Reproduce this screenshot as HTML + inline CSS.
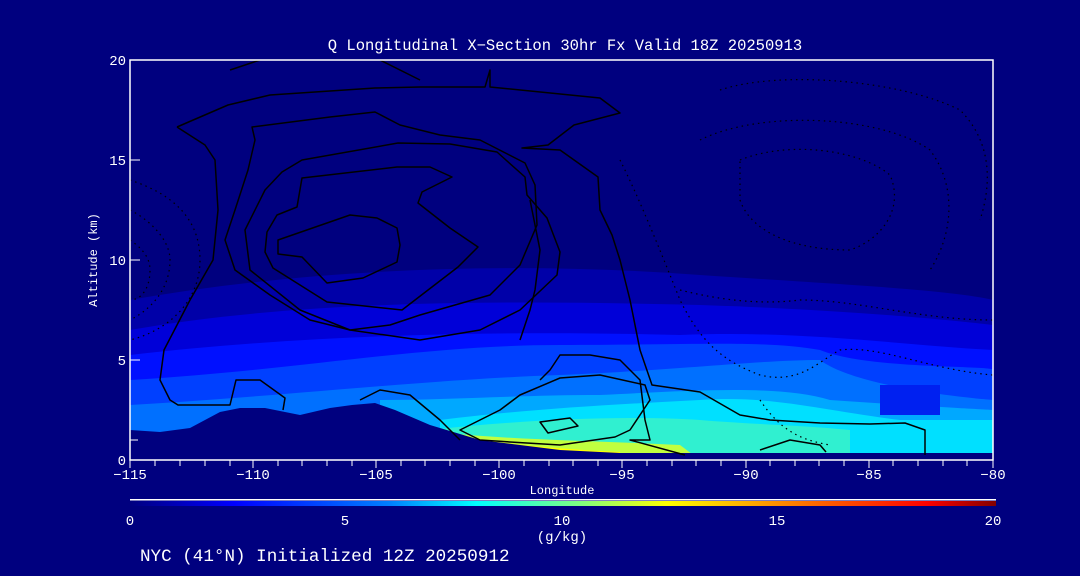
<!DOCTYPE html>
<html><head><meta charset="utf-8"><style>
html,body{margin:0;padding:0;background:#00007f;width:1080px;height:576px;overflow:hidden}
svg{display:block}
text{font-family:"Liberation Mono",monospace;fill:#fff}
</style></head><body>
<svg width="1080" height="576" viewBox="0 0 1080 576" xmlns="http://www.w3.org/2000/svg">
<defs>
<linearGradient id="cb" x1="0" x2="1" y1="0" y2="0">
<stop offset="0" stop-color="#00007f"/><stop offset="0.12" stop-color="#0000ff"/>
<stop offset="0.3" stop-color="#0080ff"/><stop offset="0.4" stop-color="#00ffff"/>
<stop offset="0.52" stop-color="#80ff80"/><stop offset="0.62" stop-color="#ffff00"/>
<stop offset="0.8" stop-color="#ff6000"/><stop offset="0.92" stop-color="#ff0000"/>
<stop offset="1" stop-color="#800000"/></linearGradient>
<clipPath id="pc"><rect x="130" y="60" width="863" height="400"/></clipPath>
</defs>
<rect width="1080" height="576" fill="#00007f"/>
<g clip-path="url(#pc)">
<path d="M130 300 C300 270 500 260 700 275 C850 285 950 290 993 300 L993 460 L130 460Z" fill="#0000a8"/>
<path d="M130 330 C300 300 500 300 700 305 C850 310 950 320 993 325 L993 460 L130 460Z" fill="#0000d8"/>
<path d="M130 355 C300 335 500 330 680 335 C800 330 900 345 993 350 L993 460 L130 460Z" fill="#0010ff"/>
<path d="M130 380 C300 370 420 345 560 345 C700 345 760 340 820 350 C870 370 993 365 993 370 L993 460 L130 460Z" fill="#0040ff"/>
<path d="M130 405 C300 395 420 380 560 375 C680 370 760 360 820 360 C860 390 993 400 993 400 L993 460 L130 460Z" fill="#0070ff"/>
<path d="M380 400 C450 400 520 395 600 395 C700 390 780 385 830 400 C900 405 993 410 993 410 L993 460 L380 460Z" fill="#00a8ff"/>
<path d="M440 420 C520 410 600 405 700 400 C770 395 820 410 900 420 L993 420 L993 460 L440 460Z" fill="#00e0ff"/>
<path d="M430 430 C520 420 620 415 700 420 C760 425 800 425 850 430 L850 460 L430 460Z" fill="#30f0d0"/>
<path d="M420 430 C500 440 580 440 680 445 L700 460 L420 460Z" fill="#c0ff40"/>
<path d="M405 425 C460 440 540 448 620 452 L620 460 L405 460Z" fill="#ffff00"/>
<rect x="880" y="385" width="60" height="30" fill="#0020f0"/>
<path d="M130 430 L160 432 L190 428 L220 412 L240 408 L265 408 L285 412 L300 415 L330 408 L352 405 L375 403 L395 410 L430 425 L480 440 L560 450 L620 453 L993 453 L993 460 L130 460Z" fill="#00007f"/>
<g fill="none" stroke="#000" stroke-width="1.5" stroke-linejoin="round">
<path d="M278 240 L350 215 L377 218 L397 228 L400 245 L397 262 L363 278 L327 283 L302 257 L278 254Z"/>
<path d="M297 207 L302 178 L397 167 L430 167 L452 177 L422 192 L418 203 L450 228 L478 247 L458 267 L402 310 L327 302 L273 268 L265 252 L267 232 L277 215Z"/>
<path d="M302 160 L398 143 L450 144 L497 152 L525 177 L527 195 L547 218 L560 252 L557 275 L520 310 L480 330 L420 340 L350 330 L300 310 L250 270 L245 230 L265 190 L282 172Z"/>
<path d="M252 127 L330 117 L375 112 L400 125 L440 135 L480 140 L525 163 L535 185 L537 225 L520 265 L490 295 L455 305 L420 315 L390 325 L350 330 L310 320 L270 295 L235 270 L225 240 L235 210 L248 170 L255 140Z"/>
<path d="M177 127 L228 105 L270 95 L375 88 L420 87 L485 87 L490 70 L490 87 L600 98 L620 113 L574 125 L548 145 L522 148 L560 150 L598 177 L600 210 L612 235 L620 260 L630 300 L640 350 L652 385 L700 392 L740 415 L770 420 L820 423 L870 424 L905 423 L925 430 L925 455"/>
<path d="M177 127 L205 145 L215 160 L218 210 L213 260 L190 300 L164 350 L160 380 L170 400 L178 405 L230 405 L236 380 L260 380 L285 398 L283 410"/>
<path d="M520 340 L530 310 L535 290 L540 250 L530 200"/>
<path d="M540 380 L550 370 L560 355 L590 355 L620 360 L640 380 L645 420 L650 440 L630 440 L685 455"/>
<path d="M500 410 L520 395 L560 378 L600 375 L645 385 L650 400 L630 430 L615 437 L560 445 L510 442 L480 440 L460 430 L500 410Z" />
<path d="M540 422 L570 418 L578 426 L548 433Z"/>
<path d="M360 400 L380 390 L410 395 L440 420 L460 440"/>
<path d="M760 450 L790 440 L820 445 L826 452"/>
<path d="M230 70 L260 60 M380 60 L420 80"/>
</g>
<g fill="none" stroke="#000" stroke-width="1.2" stroke-dasharray="1.5 4">
<path d="M720 90 C780 70 900 80 960 110 C990 140 993 180 980 220"/>
<path d="M700 140 C760 110 880 115 930 150 C960 190 950 240 930 270"/>
<path d="M740 160 C790 140 860 150 890 175 C905 210 880 240 850 250 C790 250 750 230 740 200Z"/>
<path d="M620 160 C640 200 660 250 680 300 C700 340 720 360 760 375 C800 385 820 360 840 350 C880 345 930 370 993 375"/>
<path d="M680 290 C720 300 760 305 800 300 C860 300 920 320 993 320"/>
<path d="M130 180 C160 190 200 210 200 260 C200 300 170 330 130 340"/>
<path d="M130 210 C150 220 170 240 170 260 C170 290 150 310 130 320"/>
<path d="M130 240 C145 250 150 260 150 270 C150 290 140 300 130 300"/>
<path d="M760 400 C780 430 800 440 830 445"/>
</g>
</g>
<g fill="none" stroke="#fff" stroke-width="1.5">
<rect x="130" y="60" width="863" height="400"/>
</g>
<g stroke="#fff" stroke-width="1">
<path d="M130 460V468 M155 460v6 M180 460v6 M205 460v6 M230 460v6 M253 460V468 M278 460v6 M302 460v6 M327 460v6 M352 460v6 M376 460V468 M401 460v6 M425 460v6 M450 460v6 M475 460v6 M499 460V468 M524 460v6 M549 460v6 M573 460v6 M598 460v6 M622 460V468 M647 460v6 M672 460v6 M696 460v6 M721 460v6 M746 460V468 M770 460v6 M795 460v6 M819 460v6 M844 460v6 M869 460V468 M893 460v6 M918 460v6 M943 460v6 M967 460v6 M993 460V468"/>
<path d="M130 440h8 M130 360h10 M130 260h10 M130 160h10"/>
</g>
<rect x="130" y="499" width="866" height="1.5" fill="#fff"/>
<rect x="130" y="501" width="866" height="5" fill="url(#cb)"/>
<g font-size="14" text-anchor="middle">
<text x="130" y="479">−115</text><text x="253" y="479">−110</text><text x="376" y="479">−105</text>
<text x="499" y="479">−100</text><text x="622" y="479">−95</text><text x="746" y="479">−90</text>
<text x="869" y="479">−85</text><text x="993" y="479">−80</text>
<text x="130" y="525">0</text><text x="345" y="525">5</text><text x="562" y="525">10</text><text x="777" y="525">15</text><text x="993" y="525">20</text>
<text x="562" y="541">(g/kg)</text>
</g>
<g font-size="14" text-anchor="end">
<text x="126" y="465">0</text><text x="126" y="365">5</text><text x="126" y="265">10</text><text x="126" y="165">15</text><text x="126" y="65">20</text>
</g>
<text x="562" y="494" font-size="12" text-anchor="middle">Longitude</text>
<text x="0" y="0" font-size="12" text-anchor="middle" transform="translate(97 260) rotate(-90)">Altitude (km)</text>
<text x="565" y="50" font-size="15.5" text-anchor="middle">Q Longitudinal X−Section 30hr  Fx Valid 18Z 20250913</text>
<text x="140" y="561" font-size="17.6">NYC (41°N) Initialized 12Z 20250912</text>
</svg>
</body></html>
